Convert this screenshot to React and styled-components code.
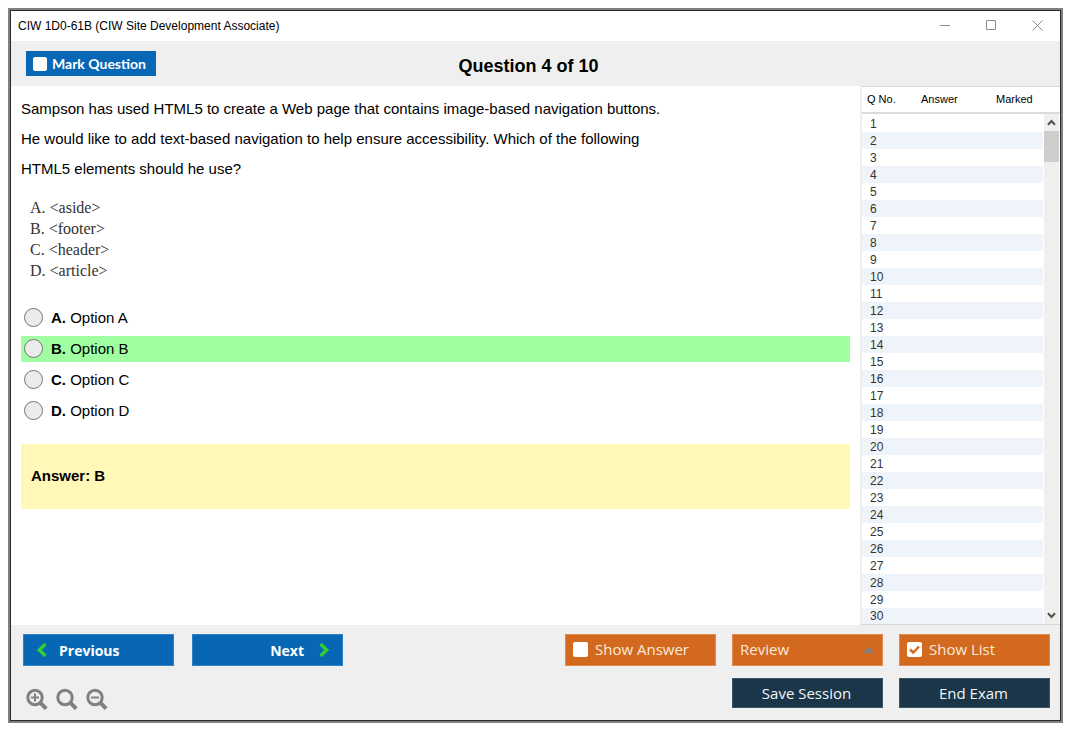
import React from 'react';
import styled, { createGlobalStyle } from 'styled-components';

const sans = '"Liberation Sans", Arial, sans-serif';
const ui = '"Open Sans", "Segoe UI", sans-serif';

const GlobalStyle = createGlobalStyle`
  *, *::before, *::after { box-sizing: border-box; }
  body { margin: 0; background: #fff; color: #000; font-family: ${sans}; }
  button, select, input { font: inherit; margin: 0; }
  button, select, label { cursor: pointer; }
`;

const Window = styled.div`
  display: flex;
  flex-direction: column;
  min-height: calc(100vh - 20px);
  margin: 8px 12px 12px 8px;
  border: 2px solid #808080;
  background: #efefef;
`;

const Frame = styled.div`
  flex: 1;
  display: flex;
  flex-direction: column;
  border: 1px solid #2b2b2b;
`;

const TitleBar = styled.header`
  display: flex;
  align-items: center;
  justify-content: space-between;
  height: 30px;
  padding-left: 7px;
  background: #fff;
  font-size: 12px;
`;

const WindowControls = styled.div`
  display: flex;
  height: 100%;
`;

const WindowButton = styled.button`
  display: grid;
  place-items: center;
  width: 46px;
  padding: 0 0 2px;
  border: 0;
  background: none;
  color: #8a8a8a;
`;

const QuestionBar = styled.div`
  display: grid;
  grid-template-columns: 1fr auto 1fr;
  align-items: center;
  height: 45px;
  padding: 0 29px 0 15px;
`;

const Heading = styled.h1`
  margin: 0;
  padding-top: 4px;
  font-size: 18px;
  line-height: 24px;
`;

const Main = styled.main`
  flex: 1;
  display: flex;
  background: #fff;
`;

const Question = styled.section`
  flex: 1;
  padding: 8px 10px;
  font-size: 15px;
`;

const Prompt = styled.p`
  max-width: 640px;
  margin: 0;
  line-height: 30px;
`;

const Choices = styled.ul`
  margin: 13px 0 24px;
  padding: 0 0 0 9px;
  list-style: none;
  font-family: "Liberation Serif", "Times New Roman", serif;
  font-size: 16px;
  line-height: 21px;
  color: #333;
`;

const Options = styled.div`
  display: flex;
  flex-direction: column;
  gap: 5px;
`;

const Option = styled.label`
  display: flex;
  align-items: center;
  gap: 8px;
  height: 26px;
  padding: 0 0 1px 3px;
  background: ${(p) => (p.$correct ? '#a0ffa0' : 'transparent')};
`;

const Radio = styled.input`
  appearance: none;
  width: 19px;
  height: 19px;
  border: 1px solid #767676;
  border-radius: 50%;
  background: #ececec;
  &:checked { box-shadow: inset 0 0 0 4px #ececec; background: #333; }
`;

const AnswerBox = styled.div`
  display: flex;
  align-items: center;
  height: 65px;
  margin-top: 20px;
  padding: 0 10px 2px;
  background: #fff8b8;
  font-weight: bold;
`;

const ListPanel = styled.aside`
  display: flex;
  width: 200px;
  border-left: 2px solid #efefef;
  border-bottom: 1px solid #d5d5d5;
  font-size: 11px;
`;

const Table = styled.table`
  flex: 1;
  align-self: flex-start;
  table-layout: fixed;
  border-collapse: separate;
  border-spacing: 0;
`;

const HeadCell = styled.th`
  width: ${(p) => p.$width};
  height: 28px;
  padding: 0 0 2px 5px;
  border-top: 1px solid #d8d8d8;
  border-bottom: 2px solid #dcdcdc;
  font-weight: normal;
  text-align: left;
  white-space: nowrap;
`;

const Cell = styled.td`
  height: 17px;
  padding: 0 0 0 8px;
  font-size: 12px;
  line-height: 16px;
  vertical-align: bottom;
  color: #333;
`;

const Row = styled.tr`
  &:nth-child(even) { background: #eef4f9; }
  &:first-child ${Cell} { height: 18px; }
  &:last-child ${Cell} { height: 16px; }
`;

const ScrollColumn = styled.div`
  display: flex;
  flex-direction: column;
  width: 17px;
`;

const ScrollHead = styled.div`
  height: 28px;
  border-top: 1px solid #d8d8d8;
  border-bottom: 2px solid #dcdcdc;
`;

const Track = styled.div`
  flex: 1;
  display: flex;
  flex-direction: column;
  margin: 0 1px;
  background: #efefef;
`;

const ScrollButton = styled.button`
  display: grid;
  place-items: center;
  height: 17px;
  padding: 0;
  border: 0;
  background: none;
  color: #505050;
`;

const Thumb = styled.div`
  height: 31px;
  margin-bottom: auto;
  background: #cdcdcd;
`;

const Footer = styled.footer`
  display: flex;
  align-items: flex-start;
  justify-content: space-between;
  padding: 9px 10px 10px 12px;
`;

const NavSide = styled.div`
  display: flex;
  flex-direction: column;
  gap: 22px;
`;

const NavRow = styled.div`
  display: flex;
  gap: 18px;
`;

const ZoomRow = styled.div`
  display: flex;
  gap: 8px;
  padding-left: 3px;
`;

const ZoomButton = styled.button`
  display: grid;
  padding: 0;
  border: 0;
  background: none;
  color: #808080;
`;

const Actions = styled.div`
  display: grid;
  grid-template-columns: repeat(3, 151px);
  grid-template-rows: 32px 30px;
  gap: 12px 16px;
  font-family: ${ui};
  font-size: 15px;
`;

const NavButton = styled.button`
  display: flex;
  align-items: center;
  justify-content: ${(p) => (p.$end ? 'flex-end' : 'flex-start')};
  gap: ${(p) => (p.$end ? '14px' : '11px')};
  width: 151px;
  height: 32px;
  padding: 0 12px;
  border: 1px solid #2f80c4;
  background: #0867b5;
  color: #fff;
  font-family: ${ui};
  font-size: 14px;
  font-weight: bold;
`;

const MarkToggle = styled.label`
  display: flex;
  align-items: center;
  gap: 5px;
  width: 130px;
  height: 25px;
  padding: 0 7px;
  background: #0867b5;
  color: #fff;
  font-family: Lato, Carlito, sans-serif;
  font-size: 14px;
  font-weight: bold;
  white-space: nowrap;
`;

const ActionToggle = styled.label`
  display: flex;
  align-items: center;
  gap: 7px;
  padding: 0 7px 2px;
  border: 1px solid #e08a4c;
  background: #d2691e;
  color: #fbe9dc;
`;

const TickBox = styled.span`
  display: grid;
  place-items: center;
  & > * { grid-area: 1 / 1; }
  & > svg { visibility: hidden; pointer-events: none; }
  & > input:checked + svg { visibility: visible; }
`;

const TickInput = styled.input`
  appearance: none;
  width: ${(p) => p.$size};
  height: ${(p) => p.$size};
  border-radius: 2px;
  background: #fff;
`;

const DarkButton = styled.button`
  grid-column: ${(p) => p.$column};
  padding: 0 2px 0 0;
  border: 1px solid #3a5568;
  background: #1b3549;
  color: #f2f5f7;
`;

const SelectWrap = styled.div`
  display: grid;
  align-items: center;
  & > * { grid-area: 1 / 1; }
  & > svg { justify-self: end; margin-right: 9px; pointer-events: none; }
`;

const ReviewSelect = styled.select`
  appearance: none;
  width: 100%;
  height: 100%;
  padding: 0 7px 2px;
  border: 1px solid #e08a4c;
  border-radius: 0;
  background: #d2691e;
  color: #fbe9dc;
`;

function Tick({ size = '15px', ...rest }) {
  return (
    <TickBox>
      <TickInput type="checkbox" $size={size} {...rest} />
      <svg width="13" height="13" viewBox="0 0 13 13" fill="none" stroke="#d2691e" strokeWidth="2.4">
        <path d="M2 6.5 5.2 9.5 11 3.5" />
      </svg>
    </TickBox>
  );
}

function Chevron({ right }) {
  return (
    <svg width="12" height="16" viewBox="0 0 12 16" fill="none" stroke="#32cd32" strokeWidth="3.4">
      <path d={right ? 'M2.5 2 8.7 8 2.5 14' : 'M9.5 2 3.3 8 9.5 14'} />
    </svg>
  );
}

function ScrollArrow({ down }) {
  return (
    <svg width="9" height="7" viewBox="0 0 9 7" fill="none" stroke="currentColor" strokeWidth="2">
      <path d={down ? 'M1 1.3 4.5 5 8 1.3' : 'M1 5.7 4.5 2 8 5.7'} />
    </svg>
  );
}

function Magnifier({ sign }) {
  return (
    <svg width="22" height="22" viewBox="0 0 22 22" fill="none" stroke="currentColor">
      <circle cx="9" cy="9.5" r="7.2" strokeWidth="3" />
      <path d="M14.2 14.7 20.2 20.7" strokeWidth="4" />
      {sign && <path d="M5 9.5H13" strokeWidth="2" />}
      {sign === 'plus' && <path d="M9 5.5V13.5" strokeWidth="2" />}
    </svg>
  );
}

const choices = ['A. <aside>', 'B. <footer>', 'C. <header>', 'D. <article>'];
const options = ['A', 'B', 'C', 'D'];
const rows = Array.from({ length: 30 }, (_, i) => i + 1);

export default function App() {
  return (
    <Window>
      <GlobalStyle />
      <Frame>
        <TitleBar>
          <span>CIW 1D0-61B (CIW Site Development Associate)</span>
          <WindowControls>
            <WindowButton aria-label="Minimize">
              <svg width="11" height="11" stroke="currentColor"><path d="M0 5.5H10" /></svg>
            </WindowButton>
            <WindowButton aria-label="Maximize">
              <svg width="11" height="11" fill="none" stroke="currentColor"><path d="M.5 .5H9.5V9.5H.5Z" /></svg>
            </WindowButton>
            <WindowButton aria-label="Close">
              <svg width="11" height="11" stroke="currentColor"><path d="M.5 .5 10.5 10.5M10.5 .5 .5 10.5" /></svg>
            </WindowButton>
          </WindowControls>
        </TitleBar>

        <QuestionBar>
          <MarkToggle>
            <Tick size="14px" />
            Mark Question
          </MarkToggle>
          <Heading>Question 4 of 10</Heading>
        </QuestionBar>

        <Main>
          <Question>
            <Prompt>
              Sampson has used HTML5 to create a Web page that contains image-based navigation buttons.
              He would like to add text-based navigation to help ensure accessibility. Which of the following
              HTML5 elements should he use?
            </Prompt>
            <Choices>
              {choices.map((c) => <li key={c}>{c}</li>)}
            </Choices>
            <Options role="radiogroup" aria-label="Options">
              {options.map((o) => (
                <Option key={o} $correct={o === 'B'}>
                  <Radio type="radio" name="option" value={o} />
                  <span><b>{o}.</b> Option {o}</span>
                </Option>
              ))}
            </Options>
            <AnswerBox>Answer: B</AnswerBox>
          </Question>

          <ListPanel>
            <Table>
              <thead>
                <tr>
                  <HeadCell $width="54px">Q No.</HeadCell>
                  <HeadCell $width="75px">Answer</HeadCell>
                  <HeadCell>Marked</HeadCell>
                </tr>
              </thead>
              <tbody>
                {rows.map((n) => (
                  <Row key={n}>
                    <Cell>{n}</Cell>
                    <Cell />
                    <Cell />
                  </Row>
                ))}
              </tbody>
            </Table>
            <ScrollColumn>
              <ScrollHead />
              <Track>
                <ScrollButton aria-label="Scroll up"><ScrollArrow /></ScrollButton>
                <Thumb />
                <ScrollButton aria-label="Scroll down"><ScrollArrow down /></ScrollButton>
              </Track>
            </ScrollColumn>
          </ListPanel>
        </Main>

        <Footer>
          <NavSide>
            <NavRow>
              <NavButton><Chevron />Previous</NavButton>
              <NavButton $end>Next<Chevron right /></NavButton>
            </NavRow>
            <ZoomRow>
              <ZoomButton aria-label="Zoom in"><Magnifier sign="plus" /></ZoomButton>
              <ZoomButton aria-label="Reset zoom"><Magnifier /></ZoomButton>
              <ZoomButton aria-label="Zoom out"><Magnifier sign="minus" /></ZoomButton>
            </ZoomRow>
          </NavSide>
          <Actions>
            <ActionToggle><Tick />Show Answer</ActionToggle>
            <SelectWrap>
              <ReviewSelect aria-label="Review">
                <option>Review</option>
              </ReviewSelect>
              <svg width="11" height="6"><path d="M0 6 5.5 0 11 6Z" fill="#808080" /></svg>
            </SelectWrap>
            <ActionToggle><Tick defaultChecked />Show List</ActionToggle>
            <DarkButton $column={2}>Save Session</DarkButton>
            <DarkButton $column={3}>End Exam</DarkButton>
          </Actions>
        </Footer>
      </Frame>
    </Window>
  );
}
